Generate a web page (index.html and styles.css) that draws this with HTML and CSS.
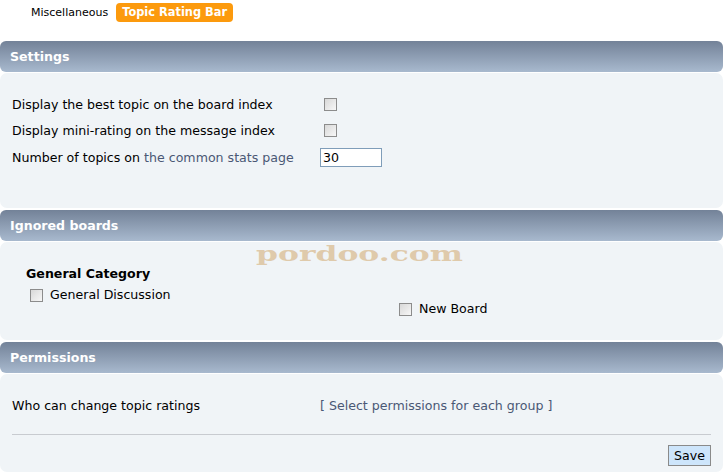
FILE: index.html
```html
<!DOCTYPE html>
<html>
<head>
<meta charset="utf-8">
<link rel="stylesheet" href="styles.css">
</head>
<body>
<div class="tabs">
  <span class="tab">Miscellaneous</span>
  <span class="tab active">Topic Rating Bar</span>
</div>

<div class="section">
  <h3 class="cat">Settings</h3>
  <div class="panel settings">
    <div class="row"><span class="lbl">Display the best topic on the board index</span><input type="checkbox" class="cb"></div>
    <div class="row"><span class="lbl">Display mini-rating on the message index</span><input type="checkbox" class="cb"></div>
    <div class="row"><span class="lbl">Number of topics on <span class="link">the common stats page</span></span><input type="text" class="num" value="30"></div>
  </div>
</div>

<div class="section">
  <h3 class="cat">Ignored boards</h3>
  <div class="panel ignored">
    <div class="watermark">pordoo.com</div>
    <div class="boards">
      <div class="col first">
        <div class="catname">General Category</div>
        <label class="board"><input type="checkbox" class="cb">General Discussion</label>
      </div>
      <div class="col second">
        <label class="board"><input type="checkbox" class="cb">New Board</label>
      </div>
    </div>
  </div>
</div>

<div class="section">
  <h3 class="cat">Permissions</h3>
  <div class="panel perms">
    <div class="row"><span class="lbl">Who can change topic ratings</span><span class="link">[ Select permissions for each group ]</span></div>
    <hr class="sep">
    <div class="actions"><button class="save">Save</button></div>
  </div>
</div>
</body>
</html>
```

FILE: styles.css
```css
html, body {
  margin: 0;
  padding: 0;
  background: #fff;
  font-family: "DejaVu Sans", Verdana, sans-serif;
  color: #000;
}
body {
  width: 725px;
}
.tabs {
  display: flex;
  align-items: flex-start;
  gap: 8px;
  padding: 3px 0 0 31px;
  height: 39px;
  box-sizing: border-box;
}
.tab {
  font-size: 11px;
  line-height: 19px;
  color: #000;
}
.tab.active {
  background: #fc9a0d;
  color: #fff;
  font-weight: bold;
  font-size: 11.4px;
  padding: 0 6px;
  border-radius: 4px;
}
.section {
  width: 723px;
  margin-top: 2px;
}
.cat {
  margin: 0;
  height: 31px;
  line-height: 32px;
  padding-left: 10px;
  font-size: 12.6px;
  font-weight: bold;
  color: #fff;
  border-radius: 6px;
  background: linear-gradient(#738298, #a8b9ce);
}
.panel {
  margin-top: 1px;
  background: #f0f4f7;
  border-radius: 7px;
  font-size: 12.6px;
  position: relative;
}
.settings {
  height: 135px;
  padding: 18px 0 0 12px;
  box-sizing: border-box;
}
.row {
  display: flex;
  align-items: center;
  height: 26.5px;
}
.lbl {
  width: 308px;
}
.link {
  color: #4a5875;
}
.cb {
  appearance: none;
  -webkit-appearance: none;
  width: 13px;
  height: 13px;
  margin: 0 0 0 4px;
  border: 1px solid #8c8c8c;
  background: linear-gradient(135deg, #d8d8d8, #f7f7f7);
  box-sizing: border-box;
}
.num {
  font-family: inherit;
  font-size: 12.6px;
  width: 62px;
  height: 19px;
  box-sizing: border-box;
  border: 1px solid #7f9db9;
  padding: 0 2px;
  margin: 0;
  background: #fff;
  color: #000;
}
.ignored {
  height: 98px;
  box-sizing: border-box;
  padding: 23px 0 0 26px;
}
.watermark {
  position: absolute;
  left: 256px;
  top: 0px;
  font-family: "DejaVu Serif", "Liberation Serif", serif;
  font-weight: bold;
  font-size: 20px;
  line-height: 24px;
  color: #dfcaab;
  transform: scaleX(1.57);
  transform-origin: left top;
}
.boards {
  display: flex;
}
.col.first {
  width: 367px;
}
.catname {
  font-weight: bold;
  font-size: 12.6px;
  line-height: 18px;
}
.board {
  display: flex;
  align-items: center;
  gap: 7px;
  line-height: 22px;
}
.col.first .board {
  margin-top: 1px;
}
.col.first .board .cb {
  margin-left: 4px;
}
.col.second {
  padding-top: 33px;
}
.col.second .board .cb {
  margin-left: 6px;
}
.perms {
  height: 98px;
  box-sizing: border-box;
  padding: 18px 12px 0 12px;
}
.perms .row {
  height: 26px;
}
.sep {
  margin: 16px 0 0 0;
  border: 0;
  border-top: 1px solid #c8cbd0;
  height: 0;
}
.actions {
  display: flex;
  justify-content: flex-end;
  padding-top: 10px;
}
.save {
  font-family: inherit;
  font-size: 12.6px;
  background: #cde5fb;
  border: 1px solid #8a8a8a;
  padding: 0 5px;
  height: 21px;
  color: #000;
}
```
